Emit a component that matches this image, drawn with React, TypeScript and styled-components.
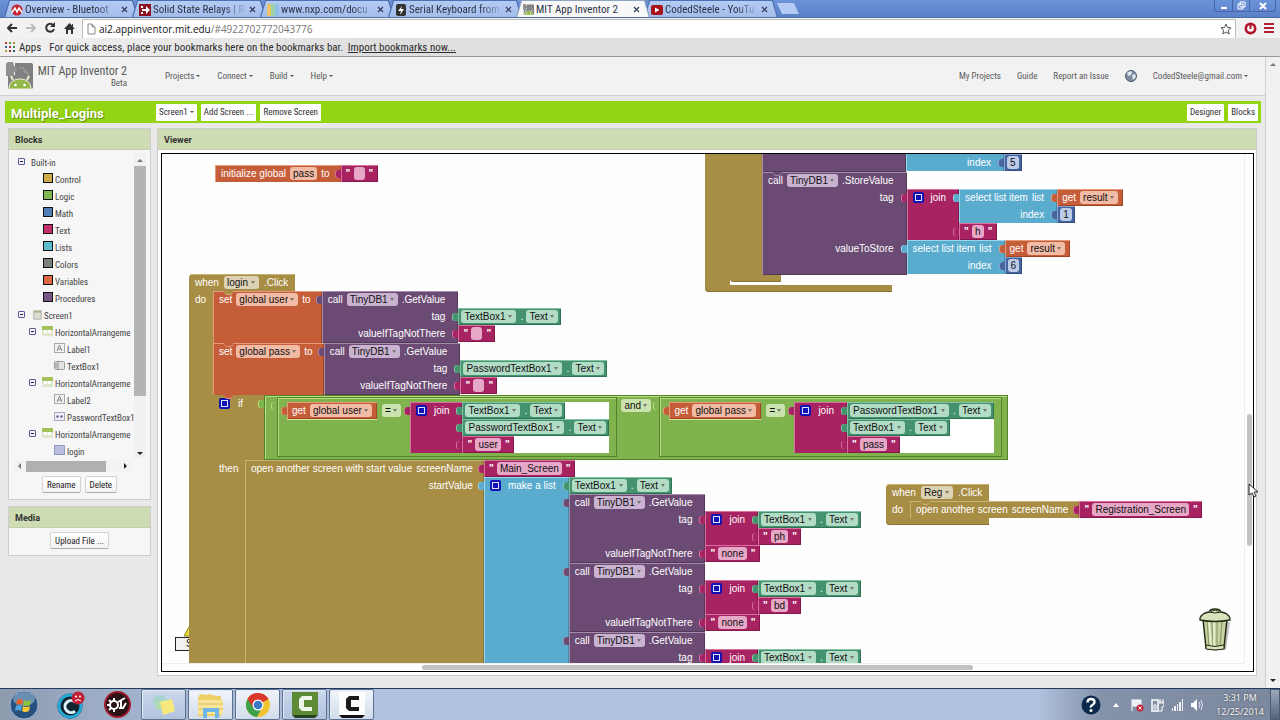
import React from "react";
import styled, { createGlobalStyle, css } from "styled-components";

const ui = `"Roboto Condensed", Roboto, sans-serif`;
const sans = `"Liberation Sans", Arial, sans-serif`;

const GlobalStyle = createGlobalStyle`
  * { box-sizing: border-box; }
  body { margin: 0; font-family: ${ui}; color: #333; background: #e9e9e9; }
  button, input, select { font: inherit; color: inherit; margin: 0; }
  svg { display: block; flex: none; }
`;

const Page = styled.div`
  height: 100vh;
  display: flex;
  flex-direction: column;
  overflow: hidden;
`;

/* ---------- Browser chrome ---------- */

const TabStrip = styled.div`
  height: 18px;
  flex: none;
  display: flex;
  padding-left: 4px;
  background: linear-gradient(#6c93d8, #5a80c8);
  border-bottom: 1px solid #4c6da8;
`;
const TabEdge = styled.div<{ $active?: boolean }>`
  width: 134px;
  margin-right: -6px;
  padding-top: 1px;
  background: ${(p) => (p.$active ? "#8fa3c4" : "#4d70b4")};
  clip-path: polygon(0 100%, 5px 0, calc(100% - 5px) 0, 100% 100%);
  position: relative;
  z-index: ${(p) => (p.$active ? 2 : 1)};
`;
const Tab = styled.div<{ $active?: boolean }>`
  height: 17px;
  display: flex;
  align-items: center;
  padding: 0 10px 0 7px;
  background: ${(p) => (p.$active ? "#f8f8f8" : "linear-gradient(#b4cbf3, #a2bcea)")};
  clip-path: polygon(1px 100%, 6px 0, calc(100% - 6px) 0, calc(100% - 1px) 100%);
  color: #2a3348;
`;
const TabTitle = styled.span<{ $fade?: boolean }>`
  flex: 1;
  margin-left: 2px;
  font-size: 11px;
  line-height: 16px;
  white-space: nowrap;
  overflow: hidden;
  ${(p) => p.$fade && css`mask-image: linear-gradient(to right, #000 74%, transparent 98%);`}
`;
const PlainButton = styled.button`
  border: 0;
  background: none;
  padding: 0;
  display: flex;
  align-items: center;
  justify-content: center;
`;
const NewTab = styled(PlainButton)`
  width: 22px;
  flex: none;
  height: 11px;
  margin: 3px 0 0 5px;
  background: #b3caf2;
  clip-path: polygon(0 0, 17px 0, 22px 100%, 5px 100%);
`;
const WindowControls = styled.div`
  display: flex;
  height: 12px;
  margin: 0 4px 0 auto;
  border: 1px solid #4667a6;
  border-top: 0;
  border-radius: 0 0 3px 3px;
`;
const WindowButton = styled(PlainButton)<{ $wide?: boolean }>`
  width: ${(p) => (p.$wide ? 26 : 17)}px;
  & + & { border-left: 1px solid #4667a6; }
`;

const Toolbar = styled.div`
  height: 20px;
  flex: none;
  display: flex;
  align-items: center;
  gap: 5px;
  padding: 0 4px 0 5px;
  background: #f2f2f2;
`;
const ToolButton = styled(PlainButton)`
  width: 14px;
  height: 14px;
`;
const AddressBar = styled.div`
  flex: 1;
  height: 19px;
  margin: 0 2px 0 1px;
  display: flex;
  align-items: center;
  gap: 3px;
  padding: 0 3px 0 4px;
  background: #fff;
  border: 1px solid #bdbdbd;
  border-bottom: 0;
`;
const Url = styled.span`
  flex: 1;
  font-family: "Open Sans", "Noto Sans", sans-serif;
  font-size: 10px;
  color: #777;
  b { font-weight: 400; color: #111; }
`;
const Bookmarks = styled.div`
  height: 19px;
  flex: none;
  display: flex;
  align-items: center;
  padding-left: 5px;
  gap: 4px;
  font-size: 11px;
  color: #2c2c2c;
  white-space: nowrap;
  background: linear-gradient(to right, #f0f0f0, #dfdfdf 30%);
  border-bottom: 1px solid #9a9a9a;
  a { color: #2c2c2c; margin-left: 2px; }
  span { margin-right: 4px; }
  p { margin: 0; }
`;

/* ---------- App Inventor page ---------- */

const Viewport = styled.div`
  flex: 1;
  min-height: 0;
  display: flex;
`;
const AppPage = styled.div`
  flex: 1;
  min-width: 0;
  display: flex;
  flex-direction: column;
`;
const PageScroll = styled.div`
  width: 15px;
  display: flex;
  flex-direction: column;
  justify-content: space-between;
  align-items: center;
  padding: 6px 0;
  background: #f1f1f1;
  border-left: 1px solid #d0d0d0;
`;
const Header = styled.header`
  height: 39px;
  flex: none;
  display: flex;
  padding: 5px 17px 0 6px;
  background: #f2f2f2;
  border-bottom: 1px solid #cfcfcf;
  color: #5a5a5a;
`;
const Brand = styled.div`
  width: 91px;
  margin-left: 3px;
  text-align: right;
  font-size: 12px;
  line-height: 14px;
  padding-top: 2px;
  white-space: nowrap;
  small { display: block; font-size: 9px; line-height: 10px; }
`;
const Nav = styled.nav<{ $right?: boolean }>`
  display: flex;
  align-items: center;
  height: 28px;
  font-size: 9px;
  white-space: nowrap;
  gap: ${(p) => (p.$right ? 16 : 17)}px;
  margin-left: ${(p) => (p.$right ? "auto" : "38px")};
  a { color: inherit; text-decoration: none; }
`;
const Caret = styled.i`
  display: inline-block;
  border: 2px solid transparent;
  border-top-color: #555;
  border-bottom: 0;
  margin-left: 2px;
  vertical-align: 2px;
`;
const ProjectBar = styled.div`
  height: 22px;
  flex: none;
  margin: 5px 4px 5px 5px;
  display: flex;
  align-items: center;
  gap: 4px;
  padding: 0 3px 0 6px;
  background: #93d413;
`;
const ProjectName = styled.h1`
  width: 141px;
  margin: 3px 0 0;
  font: bold 13px/18px Roboto, sans-serif;
  color: #fff;
  text-shadow: 1px 1px 1px #5d8a0c;
`;
const BarButton = styled.button`
  height: 17px;
  padding: 0 3px;
  border: 0;
  border-radius: 1px;
  background: #fdfdfd;
  font-size: 9px;
  line-height: 17px;
  color: #333;
  white-space: nowrap;
`;
const Spacer = styled.div`flex: 1;`;

const Main = styled.main`
  flex: 1;
  min-height: 0;
  display: flex;
  gap: 6px;
  padding: 0 8px 12px 8px;
`;
const Sidebar = styled.aside`
  width: 143px;
  flex: none;
  display: flex;
  flex-direction: column;
  gap: 6px;
`;
const Panel = styled.section<{ $grow?: boolean }>`
  display: flex;
  flex-direction: column;
  min-width: 0;
  background: #f6f6f6;
  border: 1px solid #cdcdcd;
  ${(p) => p.$grow && css`flex: 1; background: #fff;`}
`;
const PanelTitle = styled.h2`
  height: 21px;
  flex: none;
  margin: 0;
  padding: 1px 6px 0;
  background: #cddcb2;
  border-bottom: 1px solid #c2cfaa;
  font: bold 9px/21px Roboto, sans-serif;
  color: #333;
`;
const TreeArea = styled.div`
  height: 308px;
  display: flex;
  padding: 3px 4px 0 0;
`;
const Tree = styled.ul`
  flex: 1;
  min-width: 0;
  margin: 0;
  padding: 0;
  list-style: none;
  overflow: hidden;
`;
const TreeRow = styled.li<{ $level: number }>`
  height: 17px;
  display: flex;
  align-items: center;
  gap: 2px;
  padding-left: ${(p) => [9, 34, 20, 45][p.$level]}px;
  font-size: 9px;
  line-height: 14px;
  white-space: nowrap;
  color: #444;
`;
const NodeName = styled.span`padding-top: 2px;`;
const Toggle = styled(PlainButton)<{ $gap: number }>`
  width: 7px;
  height: 7px;
  margin: 0 ${(p) => p.$gap}px 0 0;
  border: 1px solid #5a5a96;
  border-radius: 1px;
  flex: none;
  &::before { content: ""; width: 3px; height: 1px; background: #22225a; }
`;
const Swatch = styled.span<{ $c: string }>`
  width: 10px;
  height: 10px;
  margin-bottom: 2px;
  border: 1px solid #111;
  background: ${(p) => p.$c};
`;
const VTrack = styled.div`
  width: 12px;
  display: flex;
  flex-direction: column;
  align-items: center;
  background: #f1f1f1;
  padding: 6px 0 3px;
`;
const VThumb = styled.div`
  width: 12px;
  height: 230px;
  margin: 4px 0 auto;
  background: #b4b4b4;
`;
const HTrack = styled.div`
  height: 12px;
  display: flex;
  align-items: center;
  margin: 2px 18px 0 4px;
  padding: 0 5px;
  gap: 5px;
  background: #f3f3f3;
`;
const HThumb = styled.div`
  width: 80px;
  height: 11px;
  margin-right: auto;
  background: #b0b0b0;
`;
const Arrow = styled.i<{ $dir: "up" | "down" | "left" | "right" }>`
  border: 3px solid transparent;
  ${(p) => p.$dir === "up" && "border-bottom-color:#777;border-top:0;"}
  ${(p) => p.$dir === "down" && "border-top-color:#222;border-bottom:0;"}
  ${(p) => p.$dir === "left" && "border-right-color:#777;border-left:0;"}
  ${(p) => p.$dir === "right" && "border-left-color:#222;border-right:0;"}
`;
const Actions = styled.div`
  display: flex;
  justify-content: center;
  gap: 4px;
  padding: 4px 0 6px;
`;
const SmallButton = styled.button`
  height: 17px;
  padding: 0 4px;
  border: 1px solid #d2d2d2;
  border-bottom-color: #aaa;
  border-radius: 2px;
  background: linear-gradient(#fff, #f3f3f3);
  font-size: 9px;
  line-height: 14px;
  color: #222;
`;

/* ---------- Workspace ---------- */

const Workspace = styled.div`
  flex: 1;
  min-height: 0;
  margin: 3px 2px 3px 3px;
  border: 1px solid #000;
  display: grid;
  grid-template: minmax(0, 1fr) 8px / minmax(0, 1fr) 9px;
  background: #fefefe;
`;
const Canvas = styled.div`
  position: relative;
  overflow: hidden;
  font-family: ${sans};
  font-size: 10px;
  color: #fff;
`;
const WsVTrack = styled.div`
  border-left: 1px solid #eee;
  padding: 0 1px 0 2px;
  &::before { content: ""; display: block; height: 51%; }
  &::after { content: ""; display: block; height: 26%; border-radius: 3px; background: #c2c2c2; }
`;
const WsHTrack = styled.div`
  border-top: 1px solid #eee;
  display: flex;
  padding: 1px 0;
  &::before { content: ""; width: 24%; }
  &::after { content: ""; width: 51%; border-radius: 3px; background: #c2c2c2; }
`;

type Tone = "ochre" | "orange" | "purple" | "teal" | "magenta" | "green" | "cyan" | "blue";
const tones: Record<Tone, { bg: string; hi: string; lo: string; field: string }> = {
  ochre: { bg: "#a88d45", hi: "#c9b478", lo: "#8a7235", field: "#ddd2b6" },
  orange: { bg: "#c65d39", hi: "#e59a7c", lo: "#9f4526", field: "#f1bba6" },
  purple: { bg: "#6b4b73", hi: "#a48cab", lo: "#533858", field: "#c9b3d0" },
  teal: { bg: "#44926e", hi: "#83c3a4", lo: "#2f7254", field: "#b3dcc7" },
  magenta: { bg: "#a72362", hi: "#d96f9f", lo: "#84184b", field: "#e7a8c8" },
  green: { bg: "#80b24e", hi: "#b5e07f", lo: "#55822c", field: "#cbe4af" },
  cyan: { bg: "#5aacce", hi: "#98d6ec", lo: "#3f8cac", field: "#bfe0ee" },
  blue: { bg: "#46659f", hi: "#8aa2cf", lo: "#334d7e", field: "#bdcbe8" },
};

const Stack = styled.div<{ $x: number; $y: number }>`
  position: absolute;
  left: ${(p) => p.$x}px;
  top: ${(p) => p.$y}px;
  display: flex;
  flex-direction: column;
  align-items: flex-start;
`;

/* puzzle tab on the left side of a value block */
const tab = css<{ $tone: Tone }>`
  position: relative;
  &::before {
    content: "";
    position: absolute;
    left: -5px;
    top: 5px;
    width: 5px;
    height: 8px;
    border-radius: 3px 0 0 3px;
    background: ${(p) => tones[p.$tone].bg};
    box-shadow: -1px 0 ${(p) => tones[p.$tone].hi};
  }
`;
const ExtBlock = styled.div<{ $tone: Tone; $statement?: boolean }>`
  display: grid;
  grid-template-columns: max-content max-content;
  justify-items: start;
  align-items: start;
  ${(p) => !p.$statement && tab}
`;
const Label = styled.div<{ $tone: Tone; $first?: boolean; $last?: boolean; $w?: number }>`
  justify-self: stretch;
  align-self: stretch;
  min-height: 17px;
  min-width: ${(p) => p.$w ?? 0}px;
  display: flex;
  align-items: flex-start;
  justify-content: flex-end;
  gap: 4px;
  padding: 0 ${(p) => (p.$tone === "ochre" || p.$tone === "orange" ? 11 : 13)}px 0 6px;
  line-height: 17px;
  white-space: nowrap;
  background: ${(p) => tones[p.$tone].bg};
  box-shadow: inset 1px ${(p) => (p.$first ? 1 : 0)}px ${(p) => tones[p.$tone].hi},
    inset -1px 0 ${(p) => tones[p.$tone].lo}
    ${(p) => p.$last && css`, inset 0 -1px ${tones[p.$tone].lo}`};
  ${(p) => p.$last && css`& + * { margin-bottom: 1px; }`}
`;
const Leaf = styled.div<{ $tone: Tone; $pad?: number }>`
  ${tab}
  height: 17px;
  display: flex;
  align-items: center;
  gap: 4px;
  padding: 0 ${(p) => p.$pad ?? 3}px;
  white-space: nowrap;
  background: ${(p) => tones[p.$tone].bg};
  box-shadow: inset 1px 1px ${(p) => tones[p.$tone].hi}, inset -1px -1px ${(p) => tones[p.$tone].lo};
`;
const Dot = styled.span`width: 2px;`;
const FieldWrap = styled.label<{ $tone: Tone }>`
  position: relative;
  height: 13px;
  margin: 2px 0;
  display: flex;
  border-radius: 3px;
  background: ${(p) => tones[p.$tone].field};
  &::after {
    content: "";
    position: absolute;
    right: 4px;
    top: 5px;
    border: 2px solid transparent;
    border-top: 3px solid #77776c;
    border-bottom: 0;
    pointer-events: none;
  }
`;
const FieldSelect = styled.select`
  appearance: none;
  height: 13px;
  border: 0;
  padding: 0 10px 0 3px;
  background: transparent;
  line-height: 13px;
  color: #111;
`;
const TextField = styled.input<{ $tone: Tone }>`
  field-sizing: content;
  height: 13px;
  min-width: 11px;
  margin: 2px 0;
  padding: 0 3px;
  border: 0;
  border-radius: 3px;
  background: ${(p) => tones[p.$tone].field};
  text-align: center;
  line-height: 13px;
  color: #111;
`;
const Quote = styled.b`
  width: 4px;
  text-align: center;
  line-height: 15px;
`;
const Gear = styled(PlainButton)`
  width: 11px;
  height: 11px;
  margin: 3px 3px 0 0;
  border-radius: 2px;
  background: #1313b4;
  &::before { content: ""; width: 5px; height: 5px; border: 1px solid #dfe3ff; }
`;

/* statement containers */
const Hat = styled.div`
  height: 17px;
  display: flex;
  gap: 5px;
  padding: 0 7px 0 6px;
  line-height: 17px;
  border-radius: 4px 0 0 0;
  background: ${tones.ochre.bg};
  box-shadow: inset 0 1px ${tones.ochre.hi};
`;
const Clause = styled.div`
  display: flex;
  align-items: stretch;
`;
const Arm = styled.div<{ $w: number }>`
  width: ${(p) => p.$w}px;
  padding-left: 6px;
  line-height: 17px;
  display: flex;
  gap: 5px;
  background: ${tones.ochre.bg};
`;
const Statements = styled.div`
  display: flex;
  flex-direction: column;
  align-items: flex-start;
`;
const Statement = styled.div<{ $prev: Tone }>`
  position: relative;
  &::after {
    content: "";
    position: absolute;
    left: 11px;
    top: 0;
    width: 9px;
    height: 3px;
    border-radius: 0 0 4px 4px;
    background: ${(p) => tones[p.$prev].bg};
    border-bottom: 1px solid ${(p) => tones[p.$prev].hi};
  }
`;
const Foot = styled.div<{ $w: number }>`
  width: ${(p) => p.$w}px;
  height: 7px;
  border-radius: 0 0 0 4px;
  background: ${tones.ochre.bg};
  box-shadow: inset 0 -1px ${tones.ochre.lo};
`;
const InnerFoot = styled(Foot)`margin-bottom: 3px;`;

/* inline logic blocks */
const Inline = styled.div<{ $outer?: boolean }>`
  position: relative;
  display: flex;
  align-items: flex-start;
  gap: ${(p) => (p.$outer ? 4 : 5)}px;
  padding: ${(p) => (p.$outer ? "1px 5px 2px 12px" : "4px 7px 3px 9px")};
  background: ${tones.green.bg};
  border: 1px solid ${tones.green.lo};
  box-shadow: inset 1px 1px ${tones.green.hi};
  &::before {
    content: "";
    position: absolute;
    left: -6px;
    top: 4px;
    width: 5px;
    height: 8px;
    border-radius: 3px 0 0 3px;
    background: ${tones.green.bg};
    box-shadow: -1px 0 ${tones.green.hi};
  }
`;
const Socket = styled.div<{ $hole?: boolean }>`
  ${(p) => (p.$hole ? "background:#fff; margin-left:4px;" : "border-bottom:1px solid #cfe8a0;")}
`;

const TrashSpot = styled.div`
  position: absolute;
  right: 12px;
  bottom: 11px;
`;
const WarningSpot = styled.div`
  position: absolute;
  left: 13px;
  bottom: 12px;
`;
const WarningBox = styled.div`
  height: 14px;
  padding: 0 6px 0 10px;
  border: 1px solid #222;
  background: #f2f2f2;
  line-height: 12px;
  color: #111;
`;
const Pointer = styled.svg`
  position: absolute;
  left: calc(100% - 32px);
  top: 483px;
  z-index: 5;
`;

/* ---------- Taskbar ---------- */

const Taskbar = styled.footer`
  height: 32px;
  flex: none;
  display: flex;
  align-items: center;
  border-top: 1px solid #20395c;
  background: linear-gradient(to right, #8e9aae, #9fb0cb 9%, #b1c2de 30%, #b1c2de 81%, #8492aa 86%, #7b879c);
`;
const Launch = styled(PlainButton)`
  width: 47px;
  height: 31px;
  flex: none;
`;
const TaskButton = styled(PlainButton)<{ $lit?: boolean }>`
  width: 45px;
  height: 31px;
  margin-right: 2px;
  flex: none;
  border: 1px solid #5d7190;
  border-radius: 2px;
  box-shadow: inset 1px 1px #e3ebf7;
  background: ${(p) => (p.$lit ? "linear-gradient(#f1f4fb, #d2dceb)" : "linear-gradient(#cbd8ec, #b2c3de)")};
`;
const Tray = styled.div`
  margin-left: auto;
  height: 31px;
  display: flex;
  align-items: center;
  gap: 7px;
`;
const Clock = styled.time`
  width: 56px;
  margin-left: 1px;
  text-align: center;
  font-family: "Open Sans", "Noto Sans", sans-serif;
  font-size: 9px;
  line-height: 14px;
  color: #fff;
  text-shadow: 0 0 2px #333;
`;
const ShowDesktop = styled(PlainButton)`
  width: 10px;
  height: 31px;
  margin-left: -5px;
  border: 1px solid #4f5b70;
  background: linear-gradient(#9ba7ba, #56637a);
`;

/* ---------- Block parts ---------- */

const Drop = ({ tone, children, name }: { tone: Tone; children: string; name?: string }) => (
  <FieldWrap $tone={tone}>
    <FieldSelect aria-label={name ?? children}><option>{children}</option></FieldSelect>
  </FieldWrap>
);
const Str = ({ value }: { value: string }) => (
  <Leaf $tone="magenta" $pad={5}>
    <Quote>"</Quote>
    <TextField $tone="magenta" aria-label="Text value" defaultValue={value} />
    <Quote>"</Quote>
  </Leaf>
);
const Num = ({ value }: { value: string }) => (
  <Leaf $tone="blue" $pad={3}>
    <TextField $tone="blue" aria-label="Number value" defaultValue={value} />
  </Leaf>
);
const Getter = ({ of }: { of: string }) => (
  <Leaf $tone="teal">
    <Drop tone="teal">{of}</Drop><Dot>.</Dot><Drop tone="teal">Text</Drop>
  </Leaf>
);
const Get = ({ name }: { name: string }) => (
  <Leaf $tone="orange" $pad={5}>get<Drop tone="orange">{name}</Drop></Leaf>
);
const Join = ({ children }: { children: React.ReactNode[] }) => (
  <ExtBlock $tone="magenta">
    {children.map((c, i) => (
      <React.Fragment key={i}>
        <Label $tone="magenta" $first={i === 0}>
          {i === 0 && <><Gear aria-label="Edit join" />join</>}
        </Label>
        {c}
      </React.Fragment>
    ))}
  </ExtBlock>
);
const SelectItem = ({ index }: { index: string }) => (
  <ExtBlock $tone="cyan">
    <Label $tone="cyan" $first>select list item <span>list</span></Label>
    <Get name="result" />
    <Label $tone="cyan">index</Label>
    <Num value={index} />
  </ExtBlock>
);
const Call = ({ method, args, statement }: { method: string; args: [string, React.ReactNode][]; statement?: boolean }) => (
  <ExtBlock $tone="purple" $statement={statement}>
    <Label $tone="purple" $first>call<Drop tone="purple">TinyDB1</Drop>{method}</Label>
    <span />
    {args.map(([label, node], i) => (
      <React.Fragment key={label}>
        <Label $tone="purple" $last={i === args.length - 1}>{label}</Label>
        {node}
      </React.Fragment>
    ))}
  </ExtBlock>
);
const SetGlobal = ({ name, source, prev }: { name: string; source: string; prev: Tone }) => (
  <Statement $prev={prev}>
    <ExtBlock $tone="orange" $statement>
      <Label $tone="orange" $first>set<Drop tone="orange">{name}</Drop>to</Label>
      <Call method=".GetValue" args={[["tag", <Getter of={source} />], ["valueIfTagNotThere", <Str value="" />]]} />
    </ExtBlock>
  </Statement>
);
const Equals = ({ name, children }: { name: string; children: React.ReactNode[] }) => (
  <Inline>
    <Socket><Get name={name} /></Socket>
    <Drop tone="green" name="Comparison">=</Drop>
    <Socket $hole><Join>{children}</Join></Socket>
  </Inline>
);
const Lookup = ({ code }: { code?: string }) => (
  <Call
    method=".GetValue"
    args={[
      ["tag", <Join>{[<Getter of="TextBox1" key="a" />, code && <Str value={code} key="b" />]}</Join>],
      ["valueIfTagNotThere", <Str value="none" />],
    ]}
  />
);

/* ---------- Icons ---------- */

const AppIcon = ({ size }: { size: number }) => (
  <svg width={size} height={size} viewBox="0 0 27 27">
    <path d="M9 1h16a2 2 0 0 1 2 2v22a2 2 0 0 1-2 2H2V13h7z" fill="#808080" />
    <path d="M0 3a3 3 0 0 1 3-3h4l1 4 3 1v4l-3 1v4H0z" fill="#8f8f8f" />
    <path d="M13 6h5v4h4v5" stroke="#a4a4a4" fill="none" strokeWidth="1" />
    <path d="M3 27c0-6 4-10 11-10s11 4 11 10z" fill="#93b848" stroke="#eef4e2" strokeWidth="1" />
    <path d="M7 18l-2-4M21 18l2-4" stroke="#e4efd0" strokeWidth="2" />
    <circle cx="9.500" cy="23" r="1.300" fill="#fff" /><circle cx="18.500" cy="23" r="1.300" fill="#fff" />
  </svg>
);
const TabIcon = ({ kind }: { kind: number }) => (
  <svg width="12" height="12" viewBox="0 0 12 12">
    {kind === 0 && <><circle cx="6" cy="6" r="5.500" fill="#c8202b" /><path d="M1 8.500L4 4l2 4 2-4 3 4.500" stroke="#fff" strokeWidth="1.600" fill="none" /></>}
    {kind === 1 && <><rect width="12" height="12" fill="#8c1220" /><path d="M2 2h2v2H2zM2 8h2v2H2zM3 5h4V2l4 4-4 4V7H3z" fill="#fff" /></>}
    {kind === 2 && <><rect width="6" height="12" fill="#e8c46a" /><rect x="4" width="4" height="12" fill="#9fd0a8" /><rect x="8" width="4" height="12" fill="#8fc1ea" /></>}
    {kind === 3 && <><rect x="1" width="10" height="12" rx="2" fill="#333" /><path d="M7 2L3 7h3l-1 4 4-6H6z" fill="#fff" /></>}
    {kind === 5 && <><rect y="1" width="12" height="10" rx="2" fill="#a5141b" /><path d="M4 3.500v5L8.500 6z" fill="#fff" /></>}
  </svg>
);
const Sheet = () => (
  <svg width="9" height="12" viewBox="0 0 9 12"><path d="M1 1h4l3 3v7H1zM5 1v3h3" fill="#fff" stroke="#8a8a8a" /></svg>
);
const Trash = () => (
  <svg width="34" height="44" viewBox="0 0 34 44">
    <path d="M5 13h25l-4 28H9z" fill="#555" opacity=".35" transform="translate(2 1)" />
    <path d="M5 11l3 29q9 3 18 0l3-29z" fill="#c8d3a3" stroke="#222b16" strokeWidth="1.500" />
    <path d="M9 13l2 26M14 13l1 26M19 13v26M24 13l-2 26" stroke="#8f9c6c" strokeWidth="1.200" />
    <path d="M11 13l2 26M16 13v26" stroke="#edf3d6" strokeWidth="1.500" />
    <path d="M8 37q9 3 18 0v4q-9 2-18 0z" fill="#dce5be" stroke="#222b16" />
    <path d="M2 10q2-5 9-6 1-3 6-3t6 3q7 1 9 6v2q-15 3-30 0z" fill="#d9e2bb" stroke="#222b16" strokeWidth="1.300" />
    <path d="M11 4q6 2 12 0M13 4q4-4 8 0" fill="none" stroke="#222b16" />
  </svg>
);
const NodeIcon = ({ kind }: { kind: string }) => (
  <svg width={kind === "screen" ? 9 : 11} height="12" viewBox="0 0 11 12">
    {kind === "screen" && <><rect x="1" y="1" width="9" height="10" fill="#dcdcd2" stroke="#a7a79c" /><rect x="1" y="1" width="9" height="2" fill="#a9b77f" /></>}
    {kind === "arr" && <><rect width="11" height="10" fill="#a4c25b" /><path d="M0 4h11v6H0z" fill="#dfe6cd" /><rect x="2" y="4" width="3" height="3" fill="#fff" /><rect x="6" y="4" width="3" height="3" fill="#fff" /></>}
    {kind === "label" && <><rect x=".5" y=".5" width="10" height="9" fill="#f1f1f1" stroke="#aaa" /><path d="M3 8l2.500-6L8 8M4 6h3" stroke="#888" fill="none" /></>}
    {kind === "text" && <><rect x=".5" y="1.500" width="10" height="8" rx="1" fill="#e4e4e4" stroke="#999" /><path d="M4 2v7M2 3v5" stroke="#888" /></>}
    {kind === "pass" && <><rect x=".5" y="1.500" width="10" height="8" fill="#eef" stroke="#a9a9b8" /><circle cx="3.500" cy="5.500" r="1.200" fill="#668" /><circle cx="7.500" cy="5.500" r="1.200" fill="#668" /></>}
    {kind === "button" && <rect x=".5" y=".5" width="10" height="9" fill="#b9bfe0" stroke="#9299bf" />}
  </svg>
);

const tabs = ["Overview - Bluetoot", "Solid State Relays | R", "www.nxp.com/docu", "Serial Keyboard from", "MIT App Inventor 2", "CodedSteele - YouTu"];
const drawers: [string, string][] = [["Control", "#d0ab4c"], ["Logic", "#80b852"], ["Math", "#4f7fb5"], ["Text", "#c4306a"], ["Lists", "#5bbccb"], ["Colors", "#7d8079"], ["Variables", "#dc6844"], ["Procedures", "#755687"]];
const nodes: [number, string, string][] = [
  [2, "arr", "HorizontalArrangeme"], [3, "label", "Label1"], [3, "text", "TextBox1"],
  [2, "arr", "HorizontalArrangeme"], [3, "label", "Label2"], [3, "pass", "PasswordTextBox1"],
  [2, "arr", "HorizontalArrangeme"], [3, "button", "login"],
];

const Camtasia = ({ dark }: { dark?: boolean }) => (
  <svg width="26" height="26" viewBox="0 0 26 26">
    <rect width="26" height="23" fill={dark ? "#5d8a35" : "#fdfdfd"} />
    <path d="M0 23h26l-3 3H3z" fill={dark ? "#28421c" : "#111"} />
    <path d="M20 4H10L7 7v9l3 3h10v-4h-8V8h8z" fill={dark ? "#eef5e6" : "#1b1b1b"} />
  </svg>
);

export default function App() {
  return (
    <Page>
      <GlobalStyle />
      <TabStrip>
        {tabs.map((t, i) => (
          <TabEdge key={t} $active={i === 4}>
            <Tab $active={i === 4}>
              {i === 4 ? <AppIcon size={11} /> : <TabIcon kind={i} />}
              <TabTitle $fade={i !== 4}>{t}</TabTitle>
              <PlainButton aria-label="Close tab">
                <svg width="7" height="7" viewBox="0 0 7 7"><path d="M1 1l5 5M6 1L1 6" stroke="#34405a" strokeWidth="1.200" /></svg>
              </PlainButton>
            </Tab>
          </TabEdge>
        ))}
        <NewTab aria-label="New tab" />
        <WindowControls>
          <WindowButton aria-label="Minimize"><svg width="8" height="8"><path d="M1 6h6" stroke="#fff" strokeWidth="2" /></svg></WindowButton>
          <WindowButton aria-label="Restore"><svg width="9" height="9"><path d="M3 1h5v5H3zM1 3h5v5H1z" fill="none" stroke="#fff" /></svg></WindowButton>
          <WindowButton $wide aria-label="Close"><svg width="8" height="8"><path d="M1 1l6 6M7 1L1 7" stroke="#fff" strokeWidth="2" /></svg></WindowButton>
        </WindowControls>
      </TabStrip>
      <Toolbar>
        <ToolButton aria-label="Back"><svg width="12" height="10" viewBox="0 0 12 10"><path d="M11 5H2M6 1L2 5l4 4" stroke="#333" strokeWidth="2" fill="none" /></svg></ToolButton>
        <ToolButton aria-label="Forward"><svg width="12" height="10" viewBox="0 0 12 10"><path d="M1 5h9M6 1l4 4-4 4" stroke="#bbb" strokeWidth="2" fill="none" /></svg></ToolButton>
        <ToolButton aria-label="Reload"><svg width="12" height="12" viewBox="0 0 12 12"><path d="M9.500 3.500A4 4 0 1 0 10 7" stroke="#333" strokeWidth="2" fill="none" /><path d="M11 0v5H6z" fill="#333" /></svg></ToolButton>
        <ToolButton aria-label="Home"><svg width="11" height="11" viewBox="0 0 11 11"><path d="M5.500 0L0 6h2v5h2V7h3v4h2V6h2L9 4V1H8v1.500z" fill="#333" /></svg></ToolButton>
        <AddressBar>
          <Sheet />
          <Url><b>ai2.appinventor.mit.edu</b>/#4922702772043776</Url>
          <svg width="12" height="12" viewBox="0 0 12 12"><path d="M6 1l1.500 3.500 3.500.3-2.700 2.400.9 3.800L6 9l-3.200 2 .9-3.800L1 4.800l3.500-.3z" fill="#fff" stroke="#555" /></svg>
        </AddressBar>
        <ToolButton aria-label="Ad blocker"><svg width="13" height="13" viewBox="0 0 13 13"><circle cx="6.500" cy="6.500" r="6" fill="#b3172c" /><circle cx="6.500" cy="6.500" r="3.300" fill="#fff" /><rect x="5.500" y="2" width="2" height="5" fill="#b3172c" /></svg></ToolButton>
        <ToolButton aria-label="Menu"><svg width="10" height="10" viewBox="0 0 10 10"><path d="M0 1h10M0 5h10M0 9h10" stroke="#b32034" strokeWidth="2" /></svg></ToolButton>
      </Toolbar>
      <Bookmarks>
        <svg width="10" height="10" viewBox="0 0 10 10">
          {[0, 1, 2].map((r) => [0, 1, 2].map((c) => <rect key={`${r}${c}`} x={c * 4} y={r * 4} width="2" height="2" fill={["#c33", "#595", "#a83", "#36a", "#a33", "#484", "#b93", "#833", "#358"][r * 3 + c]} />))}
        </svg>
        <span>Apps</span>
        <p>For quick access, place your bookmarks here on the bookmarks bar. <a href="#import">Import bookmarks now...</a></p>
      </Bookmarks>

      <Viewport>
        <AppPage>
          <Header>
            <AppIcon size={27} />
            <Brand>MIT App Inventor 2<small>Beta</small></Brand>
            <Nav>
              {["Projects", "Connect", "Build", "Help"].map((n) => <a href={`#${n}`} key={n}>{n}<Caret /></a>)}
            </Nav>
            <Nav $right>
              <a href="#projects">My Projects</a><a href="#guide">Guide</a><a href="#issue">Report an Issue</a>
              <svg width="12" height="12" viewBox="0 0 12 12"><circle cx="6" cy="6" r="5.500" fill="#7b8a9c" stroke="#4f5c6c" /><path d="M2 3q3-3 5-1l-1 3-3 1zM7 5l3-1 1 3-3 3z" fill="#dfe6ec" /></svg>
              <a href="#account">CodedSteele@gmail.com<Caret /></a>
            </Nav>
          </Header>
          <ProjectBar>
            <ProjectName>Multiple_Logins</ProjectName>
            <BarButton>Screen1<Caret /></BarButton>
            <BarButton>Add Screen ...</BarButton>
            <BarButton>Remove Screen</BarButton>
            <Spacer />
            <BarButton>Designer</BarButton>
            <BarButton>Blocks</BarButton>
          </ProjectBar>
          <Main>
            <Sidebar>
              <Panel>
                <PanelTitle>Blocks</PanelTitle>
                <TreeArea>
                  <Tree>
                    <TreeRow $level={0}><Toggle $gap={4} aria-label="Collapse" /><NodeName>Built-in</NodeName></TreeRow>
                    {drawers.map(([n, c]) => <TreeRow $level={1} key={n}><Swatch $c={c} /><NodeName>{n}</NodeName></TreeRow>)}
                    <TreeRow $level={0}><Toggle $gap={6} aria-label="Collapse" /><NodeIcon kind="screen" /><NodeName>Screen1</NodeName></TreeRow>
                    {nodes.map(([l, k, n], i) => (
                      <TreeRow $level={l} key={i}>{l === 2 && <Toggle $gap={4} aria-label="Collapse" />}<NodeIcon kind={k} /><NodeName>{n}</NodeName></TreeRow>
                    ))}
                  </Tree>
                  <VTrack><Arrow $dir="up" /><VThumb /><Arrow $dir="down" /></VTrack>
                </TreeArea>
                <HTrack><Arrow $dir="left" /><HThumb /><Arrow $dir="right" /></HTrack>
                <Actions><SmallButton>Rename</SmallButton><SmallButton>Delete</SmallButton></Actions>
              </Panel>
              <Panel>
                <PanelTitle>Media</PanelTitle>
                <Actions><SmallButton>Upload File ...</SmallButton></Actions>
              </Panel>
            </Sidebar>

            <Panel $grow>
              <PanelTitle>Viewer</PanelTitle>
              <Workspace>
                <Canvas>
                  <WarningSpot>
                    <svg width="22" height="13" viewBox="0 0 22 13"><path d="M9 12L15 1l6 11z" fill="#e9dc3c" stroke="#8d8420" /></svg>
                    <WarningBox>Show Warnings</WarningBox>
                  </WarningSpot>

                  <Stack $x={53} $y={11}>
                    <ExtBlock $tone="orange" $statement>
                      <Label $tone="orange" $first>
                        initialize global
                        <TextField $tone="orange" aria-label="Variable name" defaultValue="pass" />
                        to
                      </Label>
                      <Str value="" />
                    </ExtBlock>
                  </Stack>

                  <Stack $x={543} $y={0}>
                    <Clause>
                      <Arm $w={25} />
                      <Statements>
                        <Clause>
                          <Arm $w={32} />
                          <Statements>
                            <ExtBlock $tone="purple" $statement>
                              <Label $tone="purple" $last $w={144} />
                              <ExtBlock $tone="cyan" $statement>
                                <Label $tone="cyan" $w={98}>index</Label>
                                <Num value="5" />
                              </ExtBlock>
                            </ExtBlock>
                            <Statement $prev="purple">
                              <Call
                                statement
                                method=".StoreValue"
                                args={[
                                  ["tag", <Join>{[<SelectItem index="1" key="a" />, <Str value="h" key="b" />]}</Join>],
                                  ["valueToStore", <SelectItem index="6" />],
                                ]}
                              />
                            </Statement>
                          </Statements>
                        </Clause>
                        <InnerFoot $w={51} />
                      </Statements>
                    </Clause>
                    <Foot $w={187} />
                  </Stack>

                  <Stack $x={27} $y={120}>
                    <Hat>when<Drop tone="ochre">login</Drop>.Click</Hat>
                    <Clause>
                      <Arm $w={24}>do</Arm>
                      <Statements>
                        <SetGlobal name="global user" source="TextBox1" prev="ochre" />
                        <SetGlobal name="global pass" source="PasswordTextBox1" prev="orange" />
                        <Statement $prev="orange">
                          <Clause>
                            <Arm $w={51}><Gear aria-label="Edit if" />if</Arm>
                            <Inline $outer>
                              <Equals name="global user">
                                {[<Getter of="TextBox1" key="a" />, <Getter of="PasswordTextBox1" key="b" />, <Str value="user" key="c" />]}
                              </Equals>
                              <Drop tone="green">and</Drop>
                              <Spacer />
                              <Equals name="global pass">
                                {[<Getter of="PasswordTextBox1" key="a" />, <Getter of="TextBox1" key="b" />, <Str value="pass" key="c" />]}
                              </Equals>
                            </Inline>
                          </Clause>
                          <Clause>
                            <Arm $w={32}>then</Arm>
                            <ExtBlock $tone="ochre" $statement>
                              <Label $tone="ochre" $first>open another screen with start value <span>screenName</span></Label>
                              <Str value="Main_Screen" />
                              <Label $tone="ochre">startValue</Label>
                              <ExtBlock $tone="cyan">
                                <Label $tone="cyan" $first><Gear aria-label="Edit list" />make a list</Label>
                                <Getter of="TextBox1" />
                                <Label $tone="cyan" /><Lookup code="ph" />
                                <Label $tone="cyan" /><Lookup code="bd" />
                                <Label $tone="cyan" /><Lookup />
                              </ExtBlock>
                            </ExtBlock>
                          </Clause>
                        </Statement>
                      </Statements>
                    </Clause>
                  </Stack>

                  <Stack $x={724} $y={330}>
                    <Hat>when<Drop tone="ochre">Reg</Drop>.Click</Hat>
                    <Clause>
                      <Arm $w={24}>do</Arm>
                      <Statement $prev="ochre">
                        <ExtBlock $tone="ochre" $statement>
                          <Label $tone="ochre" $first>open another screen <span>screenName</span></Label>
                          <Str value="Registration_Screen" />
                        </ExtBlock>
                      </Statement>
                    </Clause>
                    <Foot $w={103} />
                  </Stack>

                  <TrashSpot><Trash /></TrashSpot>
                </Canvas>
                <WsVTrack />
                <WsHTrack />
              </Workspace>
            </Panel>
          </Main>
        </AppPage>
        <PageScroll><Arrow $dir="up" /><Arrow $dir="down" /></PageScroll>
      </Viewport>

      <Taskbar>
        <Launch aria-label="Start">
          <svg width="30" height="30" viewBox="0 0 30 30"><circle cx="15" cy="15" r="14" fill="#27527f" stroke="#9fb4cc" /><ellipse cx="15" cy="9" rx="11" ry="7" fill="#86aacb" opacity=".7" /><path d="M8 10q3-2 6 0l-1 5q-3-2-6 0z" fill="#e8602c" /><path d="M15 10q3 2 7 0l-1 5q-4 2-7 0z" fill="#8cc63c" /><path d="M7 16q3-2 6 0l-1 5q-3-2-6 0z" fill="#4fa3dd" /><path d="M14 16q3 2 7 0l-1 5q-4 2-7 0z" fill="#f7ca35" /></svg>
        </Launch>
        <Launch aria-label="CCleaner">
          <svg width="28" height="28" viewBox="0 0 28 28"><circle cx="13" cy="15" r="12.500" fill="#0f2531" /><circle cx="13" cy="15" r="11" fill="none" stroke="#27a9d8" strokeWidth="3" /><path d="M18 11a6 6 0 1 0 0 9" fill="none" stroke="#dff3fa" strokeWidth="3" /><circle cx="21" cy="7" r="6.500" fill="#c01f35" /><path d="M18 10q3-3 6 0" stroke="#fff" fill="none" /><circle cx="19" cy="5.500" r="1" fill="#fff" /><circle cx="23" cy="5.500" r="1" fill="#fff" /></svg>
        </Launch>
        <Launch aria-label="Game launcher">
          <svg width="27" height="27" viewBox="0 0 27 27"><circle cx="13.500" cy="13.500" r="12.500" fill="#2a1216" stroke="#a01a2c" strokeWidth="2" /><circle cx="10" cy="14" r="4" fill="none" stroke="#fff" strokeWidth="2" /><path d="M10 7v3M10 18v3M3 14h3M5 9l2 2M5 19l2-2M14 11l7-4M15 17h4l3-5M17 9v8" stroke="#fff" strokeWidth="2" /></svg>
        </Launch>
        <TaskButton aria-label="Sticky Notes">
          <svg width="26" height="24" viewBox="0 0 26 24"><circle cx="9" cy="9" r="7" fill="#a6d4cf" /><path d="M4 9l9-3 2 9-9 2z" fill="#b5dcb1" /><path d="M9 9l12-3 3 12-12 4z" fill="#f6e97b" /></svg>
        </TaskButton>
        <TaskButton $lit aria-label="File Explorer">
          <svg width="28" height="28" viewBox="0 0 28 28"><path d="M3 3l7 1 2-1 8 2h4v20H1V7z" fill="#edcf68" /><path d="M1 9h25v14H1z" fill="#f7e69a" /><path d="M1 13h25M1 18h25" stroke="#dfbe5a" /><path d="M6 17h16v10h-4v-6h-8v6H6z" fill="#6fb6e8" /></svg>
        </TaskButton>
        <TaskButton $lit aria-label="Google Chrome">
          <svg width="26" height="26" viewBox="0 0 26 26"><circle cx="13" cy="13" r="12" fill="#f0c330" /><path d="M13 13L2.600 7A12 12 0 0 1 23.400 7z" fill="#d8392b" /><path d="M2.600 7A12 12 0 0 0 12 25l5-9.500-4-2.500z" fill="#3ba24a" /><path d="M12.500 7.500h11a12 12 0 0 0-.3-.5 12 12 0 0 0-20.600 0l5 8z" fill="#d8392b" /><circle cx="13" cy="13" r="5.500" fill="#fff" /><circle cx="13" cy="13" r="4.300" fill="#3d78c5" /></svg>
        </TaskButton>
        <TaskButton aria-label="Camtasia Recorder"><Camtasia dark /></TaskButton>
        <TaskButton $lit aria-label="Camtasia Studio"><Camtasia /></TaskButton>
        <Tray>
          <svg width="20" height="20" viewBox="0 0 20 20"><circle cx="10" cy="10" r="9.500" fill="#0d2a4d" /><path d="M6.500 7.500q0-3.500 3.500-3.500t3.500 3q0 2-2 3T10 12.500" stroke="#fff" strokeWidth="2.400" fill="none" /><circle cx="10" cy="15.500" r="1.500" fill="#fff" /></svg>
          <svg width="16" height="8" viewBox="0 0 16 8"><path d="M5 6l3-4 3 4z" fill="#fff" /></svg>
          <svg width="13" height="14" viewBox="0 0 13 14"><path d="M1 1v12M2 2h8v6H2z" stroke="#fff" fill="#e9edf3" /><circle cx="9" cy="10" r="3.500" fill="#c3243a" /><path d="M7.500 8.500l3 3M10.500 8.500l-3 3" stroke="#fff" /></svg>
          <svg width="13" height="14" viewBox="0 0 13 14"><rect x="1" y="2" width="6" height="11" fill="none" stroke="#fff" strokeWidth="1.500" /><path d="M3 7h2v4H3zM8 4h5M9 1v3M12 1v3M8 5h5v3l-2 1v4H8" stroke="#fff" fill="none" /></svg>
          <svg width="12" height="12" viewBox="0 0 12 12"><path d="M1 9h1v3H1zM3 7h2v5H3zM6 5h1v7H6zM8 3h2v9H8zM11 0h1v12h-1z" fill="#eef2f7" /></svg>
          <svg width="14" height="14" viewBox="0 0 14 14"><path d="M1 5h2l4-4v12L3 9H1z" fill="#fff" /><path d="M9 4q2 3 0 6M11 2q3 5 0 10" stroke="#dfe5ee" fill="none" /></svg>
          <Clock>3:31 PM<br />12/25/2014</Clock>
          <ShowDesktop aria-label="Show desktop" />
        </Tray>
      </Taskbar>
      <Pointer width="11" height="15" viewBox="0 0 11 15"><path d="M1 1v11l3-2 2 4 2-1-2-4h4z" fill="#fff" stroke="#222" /></Pointer>
    </Page>
  );
}
